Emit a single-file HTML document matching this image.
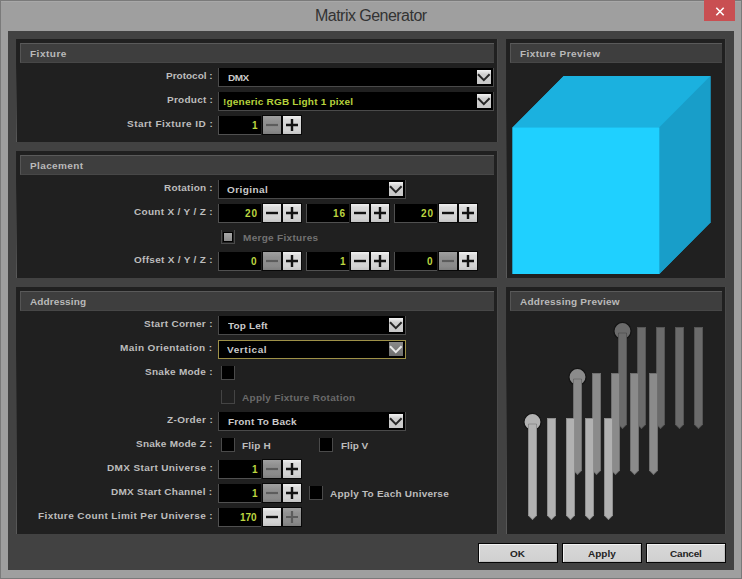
<!DOCTYPE html>
<html><head><meta charset="utf-8"><style>
html,body{margin:0;padding:0;width:742px;height:579px;overflow:hidden;background:#9f9f9f}
body{position:relative}
body>div,body>span,body>svg{position:absolute;display:block}
.t{font-family:"Liberation Sans",sans-serif;font-weight:bold;font-size:10px;line-height:14px;white-space:nowrap}
</style></head><body>
<div style="left:0px;top:0px;width:742px;height:579px;background:#9f9f9f"></div>
<div style="left:0px;top:0px;width:742px;height:1px;background:#7a7a7a"></div>
<div style="left:0px;top:0px;width:1px;height:579px;background:#7a7a7a"></div>
<div style="left:741px;top:0px;width:1px;height:579px;background:#7a7a7a"></div>
<div style="left:0px;top:578px;width:742px;height:1px;background:#7a7a7a"></div>
<div style="left:1px;top:1px;width:740px;height:1px;background:#a8a8a8"></div>
<span id="title" style="left:315px;top:6px;font-size:16px;line-height:19px;letter-spacing:-0.53px;color:#333;font-family:'Liberation Sans',sans-serif;white-space:nowrap">Matrix Generator</span>
<div style="left:704px;top:0px;width:31px;height:21px;background:#c94f52"></div>
<svg style="left:704px;top:0px" width="31" height="21" viewBox="0 0 31 21"><path d="M12.3 7.8 L19.7 15.2 M19.7 7.8 L12.3 15.2" stroke="#fff" stroke-width="1.6"/></svg>
<div style="left:8px;top:31px;width:726px;height:539px;background:#424242"></div>
<div style="left:16px;top:39px;width:481px;height:103px;background:#202020"></div>
<div style="left:497px;top:39px;width:1px;height:103px;background:#4a4a4a"></div>
<div style="left:16px;top:39px;width:1px;height:103px;background:linear-gradient(#212121 25%,#5a5a5a)"></div>
<div style="left:20px;top:43px;width:474px;height:20px;background:#3e3e3e;border-top:1px solid #5a5a5a;border-left:1px solid #555;border-bottom:1px solid #474747;box-sizing:border-box"></div>
<div style="left:16px;top:151px;width:481px;height:127px;background:#202020"></div>
<div style="left:497px;top:151px;width:1px;height:127px;background:#4a4a4a"></div>
<div style="left:16px;top:151px;width:1px;height:127px;background:linear-gradient(#212121 25%,#5a5a5a)"></div>
<div style="left:20px;top:155px;width:474px;height:20px;background:#3e3e3e;border-top:1px solid #5a5a5a;border-left:1px solid #555;border-bottom:1px solid #474747;box-sizing:border-box"></div>
<div style="left:16px;top:287px;width:481px;height:247px;background:#202020"></div>
<div style="left:497px;top:287px;width:1px;height:247px;background:#4a4a4a"></div>
<div style="left:16px;top:287px;width:1px;height:247px;background:linear-gradient(#212121 25%,#5a5a5a)"></div>
<div style="left:20px;top:291px;width:474px;height:20px;background:#3e3e3e;border-top:1px solid #5a5a5a;border-left:1px solid #555;border-bottom:1px solid #474747;box-sizing:border-box"></div>
<div style="left:506px;top:39px;width:219px;height:239px;background:#202020"></div>
<div style="left:725px;top:39px;width:1px;height:239px;background:#4a4a4a"></div>
<div style="left:506px;top:39px;width:1px;height:239px;background:linear-gradient(#212121 25%,#5a5a5a)"></div>
<div style="left:510px;top:43px;width:212px;height:20px;background:#3e3e3e;border-top:1px solid #5a5a5a;border-left:1px solid #555;border-bottom:1px solid #474747;box-sizing:border-box"></div>
<div style="left:506px;top:287px;width:219px;height:247px;background:#202020"></div>
<div style="left:725px;top:287px;width:1px;height:247px;background:#4a4a4a"></div>
<div style="left:506px;top:287px;width:1px;height:247px;background:linear-gradient(#212121 25%,#5a5a5a)"></div>
<div style="left:510px;top:291px;width:212px;height:20px;background:#3e3e3e;border-top:1px solid #5a5a5a;border-left:1px solid #555;border-bottom:1px solid #474747;box-sizing:border-box"></div>
<div style="left:218px;top:68px;width:276px;height:19px;background:#000;border:1px solid #4a4a4a;border-top:none;box-sizing:border-box"></div>
<div style="left:477px;top:70px;width:14px;height:14px;background:linear-gradient(#f2f2f2,#d0d0d0 30%,#c8c8c8)"></div>
<svg style="left:477px;top:70px" width="14" height="14" viewBox="0 0 14 14"><path d="M1 4.3 L6.8 10.1 L12.6 4.3" fill="none" stroke="#262626" stroke-width="2"/></svg>
<div style="left:218px;top:92px;width:276px;height:19px;background:#000;border:1px solid #4a4a4a;border-top:none;box-sizing:border-box"></div>
<div style="left:477px;top:94px;width:14px;height:14px;background:linear-gradient(#f2f2f2,#d0d0d0 30%,#c8c8c8)"></div>
<svg style="left:477px;top:94px" width="14" height="14" viewBox="0 0 14 14"><path d="M1 4.3 L6.8 10.1 L12.6 4.3" fill="none" stroke="#262626" stroke-width="2"/></svg>
<div style="left:218px;top:116px;width:43px;height:19px;background:#000;border-left:1px solid #505050;border-bottom:1px solid #505050;box-sizing:border-box"></div>
<div style="left:262px;top:115px;width:20px;height:20px;background:linear-gradient(#a0a0a0,#909090 30%,#8a8a8a 80%,#7e7e7e);border:1px solid #080808;box-sizing:border-box"></div>
<svg style="left:262px;top:115px" width="20" height="20" viewBox="0 0 20 20"><path d="M4 10 H16" stroke="#5c5c5c" stroke-width="2.2"/></svg>
<div style="left:282px;top:115px;width:20px;height:20px;background:linear-gradient(#f0f0f0,#dadada 20%,#d2d2d2 80%,#c4c4c4);border:1px solid #080808;box-sizing:border-box"></div>
<svg style="left:282px;top:115px" width="20" height="20" viewBox="0 0 20 20"><path d="M4 10 H16 M10 4 V16" stroke="#121212" stroke-width="2.4"/></svg>
<div style="left:218px;top:180px;width:188px;height:19px;background:#000;border:1px solid #4a4a4a;border-top:none;box-sizing:border-box"></div>
<div style="left:389px;top:182px;width:14px;height:14px;background:linear-gradient(#f2f2f2,#d0d0d0 30%,#c8c8c8)"></div>
<svg style="left:389px;top:182px" width="14" height="14" viewBox="0 0 14 14"><path d="M1 4.3 L6.8 10.1 L12.6 4.3" fill="none" stroke="#262626" stroke-width="2"/></svg>
<div style="left:218px;top:204px;width:43px;height:19px;background:#000;border-left:1px solid #505050;border-bottom:1px solid #505050;box-sizing:border-box"></div>
<div style="left:262px;top:203px;width:20px;height:20px;background:linear-gradient(#f0f0f0,#dadada 20%,#d2d2d2 80%,#c4c4c4);border:1px solid #080808;box-sizing:border-box"></div>
<svg style="left:262px;top:203px" width="20" height="20" viewBox="0 0 20 20"><path d="M4 10 H16" stroke="#121212" stroke-width="2.4"/></svg>
<div style="left:282px;top:203px;width:20px;height:20px;background:linear-gradient(#f0f0f0,#dadada 20%,#d2d2d2 80%,#c4c4c4);border:1px solid #080808;box-sizing:border-box"></div>
<svg style="left:282px;top:203px" width="20" height="20" viewBox="0 0 20 20"><path d="M4 10 H16 M10 4 V16" stroke="#121212" stroke-width="2.4"/></svg>
<div style="left:306px;top:204px;width:43px;height:19px;background:#000;border-left:1px solid #505050;border-bottom:1px solid #505050;box-sizing:border-box"></div>
<div style="left:350px;top:203px;width:20px;height:20px;background:linear-gradient(#f0f0f0,#dadada 20%,#d2d2d2 80%,#c4c4c4);border:1px solid #080808;box-sizing:border-box"></div>
<svg style="left:350px;top:203px" width="20" height="20" viewBox="0 0 20 20"><path d="M4 10 H16" stroke="#121212" stroke-width="2.4"/></svg>
<div style="left:370px;top:203px;width:20px;height:20px;background:linear-gradient(#f0f0f0,#dadada 20%,#d2d2d2 80%,#c4c4c4);border:1px solid #080808;box-sizing:border-box"></div>
<svg style="left:370px;top:203px" width="20" height="20" viewBox="0 0 20 20"><path d="M4 10 H16 M10 4 V16" stroke="#121212" stroke-width="2.4"/></svg>
<div style="left:394px;top:204px;width:43px;height:19px;background:#000;border-left:1px solid #505050;border-bottom:1px solid #505050;box-sizing:border-box"></div>
<div style="left:438px;top:203px;width:20px;height:20px;background:linear-gradient(#f0f0f0,#dadada 20%,#d2d2d2 80%,#c4c4c4);border:1px solid #080808;box-sizing:border-box"></div>
<svg style="left:438px;top:203px" width="20" height="20" viewBox="0 0 20 20"><path d="M4 10 H16" stroke="#121212" stroke-width="2.4"/></svg>
<div style="left:458px;top:203px;width:20px;height:20px;background:linear-gradient(#f0f0f0,#dadada 20%,#d2d2d2 80%,#c4c4c4);border:1px solid #080808;box-sizing:border-box"></div>
<svg style="left:458px;top:203px" width="20" height="20" viewBox="0 0 20 20"><path d="M4 10 H16 M10 4 V16" stroke="#121212" stroke-width="2.4"/></svg>
<div style="left:221px;top:230px;width:14px;height:14px;background:#212121;border:1px solid #4a4a4a;border-top:none;box-sizing:border-box"></div>
<div style="left:223px;top:232px;width:10px;height:10px;background:#000"></div>
<div style="left:224px;top:233px;width:8px;height:8px;background:linear-gradient(#a8a8a8,#8c8c8c)"></div>
<div style="left:218px;top:252px;width:43px;height:19px;background:#000;border-left:1px solid #505050;border-bottom:1px solid #505050;box-sizing:border-box"></div>
<div style="left:262px;top:251px;width:20px;height:20px;background:linear-gradient(#a0a0a0,#909090 30%,#8a8a8a 80%,#7e7e7e);border:1px solid #080808;box-sizing:border-box"></div>
<svg style="left:262px;top:251px" width="20" height="20" viewBox="0 0 20 20"><path d="M4 10 H16" stroke="#5c5c5c" stroke-width="2.2"/></svg>
<div style="left:282px;top:251px;width:20px;height:20px;background:linear-gradient(#f0f0f0,#dadada 20%,#d2d2d2 80%,#c4c4c4);border:1px solid #080808;box-sizing:border-box"></div>
<svg style="left:282px;top:251px" width="20" height="20" viewBox="0 0 20 20"><path d="M4 10 H16 M10 4 V16" stroke="#121212" stroke-width="2.4"/></svg>
<div style="left:306px;top:252px;width:43px;height:19px;background:#000;border-left:1px solid #505050;border-bottom:1px solid #505050;box-sizing:border-box"></div>
<div style="left:350px;top:251px;width:20px;height:20px;background:linear-gradient(#f0f0f0,#dadada 20%,#d2d2d2 80%,#c4c4c4);border:1px solid #080808;box-sizing:border-box"></div>
<svg style="left:350px;top:251px" width="20" height="20" viewBox="0 0 20 20"><path d="M4 10 H16" stroke="#121212" stroke-width="2.4"/></svg>
<div style="left:370px;top:251px;width:20px;height:20px;background:linear-gradient(#f0f0f0,#dadada 20%,#d2d2d2 80%,#c4c4c4);border:1px solid #080808;box-sizing:border-box"></div>
<svg style="left:370px;top:251px" width="20" height="20" viewBox="0 0 20 20"><path d="M4 10 H16 M10 4 V16" stroke="#121212" stroke-width="2.4"/></svg>
<div style="left:394px;top:252px;width:43px;height:19px;background:#000;border-left:1px solid #505050;border-bottom:1px solid #505050;box-sizing:border-box"></div>
<div style="left:438px;top:251px;width:20px;height:20px;background:linear-gradient(#a0a0a0,#909090 30%,#8a8a8a 80%,#7e7e7e);border:1px solid #080808;box-sizing:border-box"></div>
<svg style="left:438px;top:251px" width="20" height="20" viewBox="0 0 20 20"><path d="M4 10 H16" stroke="#5c5c5c" stroke-width="2.2"/></svg>
<div style="left:458px;top:251px;width:20px;height:20px;background:linear-gradient(#f0f0f0,#dadada 20%,#d2d2d2 80%,#c4c4c4);border:1px solid #080808;box-sizing:border-box"></div>
<svg style="left:458px;top:251px" width="20" height="20" viewBox="0 0 20 20"><path d="M4 10 H16 M10 4 V16" stroke="#121212" stroke-width="2.4"/></svg>
<div style="left:218px;top:316px;width:188px;height:19px;background:#000;border:1px solid #4a4a4a;border-top:none;box-sizing:border-box"></div>
<div style="left:389px;top:318px;width:14px;height:14px;background:linear-gradient(#f2f2f2,#d0d0d0 30%,#c8c8c8)"></div>
<svg style="left:389px;top:318px" width="14" height="14" viewBox="0 0 14 14"><path d="M1 4.3 L6.8 10.1 L12.6 4.3" fill="none" stroke="#262626" stroke-width="2"/></svg>
<div style="left:218px;top:340px;width:188px;height:19px;background:#000;border:1px solid #9e9148;box-sizing:border-box"></div>
<div style="left:389px;top:342px;width:14px;height:14px;background:linear-gradient(#8a8a8a,#6e6e6e)"></div>
<svg style="left:389px;top:342px" width="14" height="14" viewBox="0 0 14 14"><path d="M1 4.3 L6.8 10.1 L12.6 4.3" fill="none" stroke="#e8e8e8" stroke-width="2"/></svg>
<div style="left:221px;top:366px;width:14px;height:14px;background:#000;border:1px solid #4a4a4a;border-top:none;box-sizing:border-box"></div>
<div style="left:221px;top:390px;width:14px;height:14px;background:#212121;border:1px solid #444;border-top:none;box-sizing:border-box"></div>
<div style="left:218px;top:412px;width:188px;height:19px;background:#000;border:1px solid #4a4a4a;border-top:none;box-sizing:border-box"></div>
<div style="left:389px;top:414px;width:14px;height:14px;background:linear-gradient(#f2f2f2,#d0d0d0 30%,#c8c8c8)"></div>
<svg style="left:389px;top:414px" width="14" height="14" viewBox="0 0 14 14"><path d="M1 4.3 L6.8 10.1 L12.6 4.3" fill="none" stroke="#262626" stroke-width="2"/></svg>
<div style="left:221px;top:438px;width:14px;height:14px;background:#000;border:1px solid #4a4a4a;border-top:none;box-sizing:border-box"></div>
<div style="left:319px;top:438px;width:14px;height:14px;background:#000;border:1px solid #4a4a4a;border-top:none;box-sizing:border-box"></div>
<div style="left:218px;top:460px;width:43px;height:19px;background:#000;border-left:1px solid #505050;border-bottom:1px solid #505050;box-sizing:border-box"></div>
<div style="left:262px;top:459px;width:20px;height:20px;background:linear-gradient(#a0a0a0,#909090 30%,#8a8a8a 80%,#7e7e7e);border:1px solid #080808;box-sizing:border-box"></div>
<svg style="left:262px;top:459px" width="20" height="20" viewBox="0 0 20 20"><path d="M4 10 H16" stroke="#5c5c5c" stroke-width="2.2"/></svg>
<div style="left:282px;top:459px;width:20px;height:20px;background:linear-gradient(#f0f0f0,#dadada 20%,#d2d2d2 80%,#c4c4c4);border:1px solid #080808;box-sizing:border-box"></div>
<svg style="left:282px;top:459px" width="20" height="20" viewBox="0 0 20 20"><path d="M4 10 H16 M10 4 V16" stroke="#121212" stroke-width="2.4"/></svg>
<div style="left:218px;top:484px;width:43px;height:19px;background:#000;border-left:1px solid #505050;border-bottom:1px solid #505050;box-sizing:border-box"></div>
<div style="left:262px;top:483px;width:20px;height:20px;background:linear-gradient(#a0a0a0,#909090 30%,#8a8a8a 80%,#7e7e7e);border:1px solid #080808;box-sizing:border-box"></div>
<svg style="left:262px;top:483px" width="20" height="20" viewBox="0 0 20 20"><path d="M4 10 H16" stroke="#5c5c5c" stroke-width="2.2"/></svg>
<div style="left:282px;top:483px;width:20px;height:20px;background:linear-gradient(#f0f0f0,#dadada 20%,#d2d2d2 80%,#c4c4c4);border:1px solid #080808;box-sizing:border-box"></div>
<svg style="left:282px;top:483px" width="20" height="20" viewBox="0 0 20 20"><path d="M4 10 H16 M10 4 V16" stroke="#121212" stroke-width="2.4"/></svg>
<div style="left:309px;top:486px;width:14px;height:14px;background:#000;border:1px solid #4a4a4a;border-top:none;box-sizing:border-box"></div>
<div style="left:218px;top:508px;width:43px;height:19px;background:#000;border-left:1px solid #505050;border-bottom:1px solid #505050;box-sizing:border-box"></div>
<div style="left:262px;top:507px;width:20px;height:20px;background:linear-gradient(#f0f0f0,#dadada 20%,#d2d2d2 80%,#c4c4c4);border:1px solid #080808;box-sizing:border-box"></div>
<svg style="left:262px;top:507px" width="20" height="20" viewBox="0 0 20 20"><path d="M4 10 H16" stroke="#121212" stroke-width="2.4"/></svg>
<div style="left:282px;top:507px;width:20px;height:20px;background:linear-gradient(#a0a0a0,#909090 30%,#8a8a8a 80%,#7e7e7e);border:1px solid #080808;box-sizing:border-box"></div>
<svg style="left:282px;top:507px" width="20" height="20" viewBox="0 0 20 20"><path d="M4 10 H16 M10 4 V16" stroke="#5c5c5c" stroke-width="2.2"/></svg>
<svg style="left:0;top:0" width="742" height="579" viewBox="0 0 742 579">
<polygon points="512.5,127.5 563.7,76.0 710.5,76.0 710.5,222.5 659.3,274.0 512.5,274.0" fill="#1aa6d4"/>
<polygon points="512.5,127.5 563.7,76.0 710.5,76.0 659.3,127.5" fill="#1bb1df"/>
<polygon points="659.3,127.5 710.5,76.0 710.5,222.5 659.3,274.0" fill="#189ec9"/>
<rect x="512.5" y="127.5" width="146.8" height="146.5" fill="#1fd0ff"/>
</svg>
<svg style="left:0;top:0" width="742" height="579" viewBox="0 0 742 579"><circle cx="622.5" cy="331" r="8.6" fill="#6b6b6b" stroke="#151515" stroke-width="1.3"/><path d="M618 333 H627 V424.5 L622.5 429 L618 424.5 Z" fill="#6b6b6b"/><path d="M618.5 333 H626.5 V424.3 L622.5 428.3 L618.5 424.3 Z" fill="none" stroke="#000" stroke-opacity="0.2" stroke-width="1"/><path d="M637 327 H646 V424.5 L641.5 429 L637 424.5 Z" fill="#6b6b6b"/><path d="M637.5 327.5 H645.5 V424.3 L641.5 428.3 L637.5 424.3 Z" fill="none" stroke="#000" stroke-opacity="0.2" stroke-width="1"/><path d="M656 327 H665 V424.5 L660.5 429 L656 424.5 Z" fill="#6b6b6b"/><path d="M656.5 327.5 H664.5 V424.3 L660.5 428.3 L656.5 424.3 Z" fill="none" stroke="#000" stroke-opacity="0.2" stroke-width="1"/><path d="M675 327 H684 V424.5 L679.5 429 L675 424.5 Z" fill="#6b6b6b"/><path d="M675.5 327.5 H683.5 V424.3 L679.5 428.3 L675.5 424.3 Z" fill="none" stroke="#000" stroke-opacity="0.2" stroke-width="1"/><path d="M694 327 H703 V424.5 L698.5 429 L694 424.5 Z" fill="#6b6b6b"/><path d="M694.5 327.5 H702.5 V424.3 L698.5 428.3 L694.5 424.3 Z" fill="none" stroke="#000" stroke-opacity="0.2" stroke-width="1"/><circle cx="577.5" cy="377" r="8.6" fill="#8b8b8b" stroke="#151515" stroke-width="1.3"/><path d="M573 379 H582 V470.5 L577.5 475 L573 470.5 Z" fill="#8b8b8b"/><path d="M573.5 379 H581.5 V470.3 L577.5 474.3 L573.5 470.3 Z" fill="none" stroke="#000" stroke-opacity="0.2" stroke-width="1"/><path d="M592 373 H601 V470.5 L596.5 475 L592 470.5 Z" fill="#8b8b8b"/><path d="M592.5 373.5 H600.5 V470.3 L596.5 474.3 L592.5 470.3 Z" fill="none" stroke="#000" stroke-opacity="0.2" stroke-width="1"/><path d="M611 373 H620 V470.5 L615.5 475 L611 470.5 Z" fill="#8b8b8b"/><path d="M611.5 373.5 H619.5 V470.3 L615.5 474.3 L611.5 470.3 Z" fill="none" stroke="#000" stroke-opacity="0.2" stroke-width="1"/><path d="M630 373 H639 V470.5 L634.5 475 L630 470.5 Z" fill="#8b8b8b"/><path d="M630.5 373.5 H638.5 V470.3 L634.5 474.3 L630.5 470.3 Z" fill="none" stroke="#000" stroke-opacity="0.2" stroke-width="1"/><path d="M649 373 H658 V470.5 L653.5 475 L649 470.5 Z" fill="#8b8b8b"/><path d="M649.5 373.5 H657.5 V470.3 L653.5 474.3 L649.5 470.3 Z" fill="none" stroke="#000" stroke-opacity="0.2" stroke-width="1"/><circle cx="532.5" cy="422" r="8.6" fill="#b2b2b2" stroke="#151515" stroke-width="1.3"/><path d="M528 424 H537 V515.5 L532.5 520 L528 515.5 Z" fill="#b2b2b2"/><path d="M528.5 424 H536.5 V515.3 L532.5 519.3 L528.5 515.3 Z" fill="none" stroke="#000" stroke-opacity="0.2" stroke-width="1"/><path d="M547 418 H556 V515.5 L551.5 520 L547 515.5 Z" fill="#b2b2b2"/><path d="M547.5 418.5 H555.5 V515.3 L551.5 519.3 L547.5 515.3 Z" fill="none" stroke="#000" stroke-opacity="0.2" stroke-width="1"/><path d="M566 418 H575 V515.5 L570.5 520 L566 515.5 Z" fill="#b2b2b2"/><path d="M566.5 418.5 H574.5 V515.3 L570.5 519.3 L566.5 515.3 Z" fill="none" stroke="#000" stroke-opacity="0.2" stroke-width="1"/><path d="M585 418 H594 V515.5 L589.5 520 L585 515.5 Z" fill="#b2b2b2"/><path d="M585.5 418.5 H593.5 V515.3 L589.5 519.3 L585.5 515.3 Z" fill="none" stroke="#000" stroke-opacity="0.2" stroke-width="1"/><path d="M604 418 H613 V515.5 L608.5 520 L604 515.5 Z" fill="#b2b2b2"/><path d="M604.5 418.5 H612.5 V515.3 L608.5 519.3 L604.5 515.3 Z" fill="none" stroke="#000" stroke-opacity="0.2" stroke-width="1"/></svg>
<div style="left:478px;top:543px;width:80px;height:20px;background:linear-gradient(#d8d8d8,#d0d0d0);border:1px solid #050505;box-shadow:inset 1px 1px 0 #f2f2f2, inset -1px -1px 0 #c0c0c0;box-sizing:border-box"></div>
<div style="left:562px;top:543px;width:80px;height:20px;background:linear-gradient(#d8d8d8,#d0d0d0);border:1px solid #050505;box-shadow:inset 1px 1px 0 #f2f2f2, inset -1px -1px 0 #c0c0c0;box-sizing:border-box"></div>
<div style="left:646px;top:543px;width:80px;height:20px;background:linear-gradient(#d8d8d8,#d0d0d0);border:1px solid #050505;box-shadow:inset 1px 1px 0 #f2f2f2, inset -1px -1px 0 #c0c0c0;box-sizing:border-box"></div>
<span class="t" style="left:166px;top:70px;color:#bdbdbd;letter-spacing:0.000px;transform:scaleY(0.88);transform-origin:0 0">Protocol :</span>
<span class="t" style="left:167px;top:94px;color:#bdbdbd;letter-spacing:0.250px;transform:scaleY(0.88);transform-origin:0 0">Product :</span>
<span class="t" style="left:127px;top:118px;color:#bdbdbd;letter-spacing:0.471px;transform:scaleY(0.88);transform-origin:0 0">Start Fixture ID :</span>
<span class="t" style="left:164px;top:182px;color:#bdbdbd;letter-spacing:0.222px;transform:scaleY(0.88);transform-origin:0 0">Rotation :</span>
<span class="t" style="left:134px;top:206px;color:#bdbdbd;letter-spacing:0.312px;transform:scaleY(0.88);transform-origin:0 0">Count X / Y / Z :</span>
<span class="t" style="left:134px;top:254px;color:#bdbdbd;letter-spacing:0.294px;transform:scaleY(0.88);transform-origin:0 0">Offset X / Y / Z :</span>
<span class="t" style="left:144px;top:318px;color:#bdbdbd;letter-spacing:0.308px;transform:scaleY(0.88);transform-origin:0 0">Start Corner :</span>
<span class="t" style="left:120px;top:342px;color:#bdbdbd;letter-spacing:0.412px;transform:scaleY(0.88);transform-origin:0 0">Main Orientation :</span>
<span class="t" style="left:145px;top:366px;color:#bdbdbd;letter-spacing:0.273px;transform:scaleY(0.88);transform-origin:0 0">Snake Mode :</span>
<span class="t" style="left:167px;top:414px;color:#bdbdbd;letter-spacing:0.375px;transform:scaleY(0.88);transform-origin:0 0">Z-Order :</span>
<span class="t" style="left:136px;top:438px;color:#bdbdbd;letter-spacing:0.231px;transform:scaleY(0.88);transform-origin:0 0">Snake Mode Z :</span>
<span class="t" style="left:107px;top:462px;color:#bdbdbd;letter-spacing:0.368px;transform:scaleY(0.88);transform-origin:0 0">DMX Start Universe :</span>
<span class="t" style="left:111px;top:486px;color:#bdbdbd;letter-spacing:0.278px;transform:scaleY(0.88);transform-origin:0 0">DMX Start Channel :</span>
<span class="t" style="left:38px;top:510px;color:#bdbdbd;letter-spacing:0.394px;transform:scaleY(0.88);transform-origin:0 0">Fixture Count Limit Per Universe :</span>
<span class="t" style="left:30px;top:48px;color:#bababa;letter-spacing:0.500px;transform:scaleY(0.88);transform-origin:0 0">Fixture</span>
<span class="t" style="left:30px;top:160px;color:#bababa;letter-spacing:0.375px;transform:scaleY(0.88);transform-origin:0 0">Placement</span>
<span class="t" style="left:30px;top:296px;color:#bababa;letter-spacing:0.111px;transform:scaleY(0.88);transform-origin:0 0">Addressing</span>
<span class="t" style="left:520px;top:48px;color:#bababa;letter-spacing:0.429px;transform:scaleY(0.88);transform-origin:0 0">Fixture Preview</span>
<span class="t" style="left:520px;top:296px;color:#bababa;letter-spacing:0.235px;transform:scaleY(0.88);transform-origin:0 0">Addressing Preview</span>
<span class="t" style="left:228px;top:72px;color:#cacaca;letter-spacing:-0.500px;transform:scaleY(0.88);transform-origin:0 0">DMX</span>
<span class="t" style="left:223px;top:96px;color:#b6d23c;letter-spacing:0.200px;transform:scaleY(0.88);transform-origin:0 0">!generic RGB Light 1 pixel</span>
<span class="t" style="left:227px;top:184px;color:#cacaca;letter-spacing:0.429px;transform:scaleY(0.88);transform-origin:0 0">Original</span>
<span class="t" style="left:228px;top:320px;color:#cacaca;letter-spacing:0.143px;transform:scaleY(0.88);transform-origin:0 0">Top Left</span>
<span class="t" style="left:227px;top:344px;color:#cacaca;letter-spacing:0.571px;transform:scaleY(0.88);transform-origin:0 0">Vertical</span>
<span class="t" style="left:228px;top:416px;color:#cacaca;letter-spacing:0.167px;transform:scaleY(0.88);transform-origin:0 0">Front To Back</span>
<span class="t" style="left:243px;top:232px;color:#727272;letter-spacing:0.308px;transform:scaleY(0.88);transform-origin:0 0">Merge Fixtures</span>
<span class="t" style="left:242px;top:392px;color:#6a6a6a;letter-spacing:0.286px;transform:scaleY(0.88);transform-origin:0 0">Apply Fixture Rotation</span>
<span class="t" style="left:242px;top:440px;color:#bdbdbd;letter-spacing:0.200px;transform:scaleY(0.88);transform-origin:0 0">Flip H</span>
<span class="t" style="left:341px;top:440px;color:#bdbdbd;letter-spacing:0.000px;transform:scaleY(0.88);transform-origin:0 0">Flip V</span>
<span class="t" style="left:330px;top:488px;color:#bdbdbd;letter-spacing:0.238px;transform:scaleY(0.88);transform-origin:0 0">Apply To Each Universe</span>
<span class="t" style="left:510px;top:548px;color:#242424;letter-spacing:0.000px;transform:scaleY(0.88);transform-origin:0 0">OK</span>
<span class="t" style="left:588px;top:548px;color:#242424;letter-spacing:0.000px;transform:scaleY(0.88);transform-origin:0 0">Apply</span>
<span class="t" style="left:670px;top:548px;color:#242424;letter-spacing:-0.200px;transform:scaleY(0.88);transform-origin:0 0">Cancel</span>
<span class="t" style="left:252px;top:119px;color:#bcd640;letter-spacing:0.000px;">1</span>
<span class="t" style="left:245px;top:207px;color:#bcd640;letter-spacing:1.000px;">20</span>
<span class="t" style="left:333px;top:207px;color:#bcd640;letter-spacing:1.000px;">16</span>
<span class="t" style="left:421px;top:207px;color:#bcd640;letter-spacing:1.000px;">20</span>
<span class="t" style="left:251px;top:255px;color:#bcd640;letter-spacing:0.000px;">0</span>
<span class="t" style="left:340px;top:255px;color:#bcd640;letter-spacing:0.000px;">1</span>
<span class="t" style="left:427px;top:255px;color:#bcd640;letter-spacing:0.000px;">0</span>
<span class="t" style="left:252px;top:463px;color:#bcd640;letter-spacing:0.000px;">1</span>
<span class="t" style="left:252px;top:487px;color:#bcd640;letter-spacing:0.000px;">1</span>
<span class="t" style="left:240px;top:511px;color:#bcd640;letter-spacing:0.000px;">170</span>
</body></html>
